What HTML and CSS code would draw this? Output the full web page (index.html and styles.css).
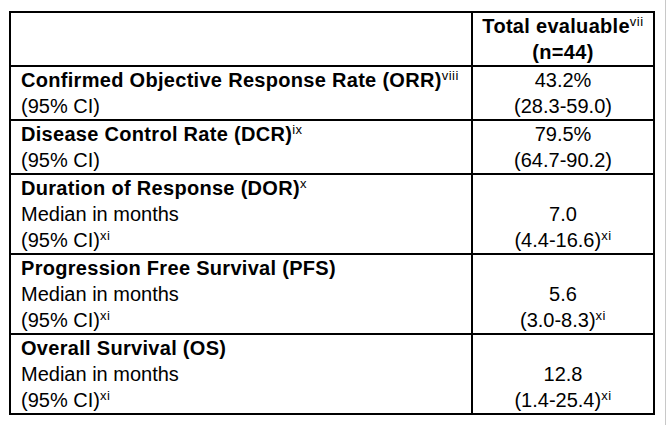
FILE: index.html
```html
<!DOCTYPE html>
<html>
<head>
<meta charset="utf-8">
<link rel="stylesheet" href="styles.css">
</head>
<body>
<div class="page">
<table class="results">
  <tr>
    <td class="label"></td>
    <td class="value head"><b>Total evaluable<sup>vii</sup></b><br><b>(n=44)</b></td>
  </tr>
  <tr>
    <td class="label"><b>Confirmed Objective Response Rate (ORR)<sup>viii</sup></b><br>(95% CI)</td>
    <td class="value">43.2%<br>(28.3-59.0)</td>
  </tr>
  <tr>
    <td class="label"><b>Disease Control Rate (DCR)<sup>ix</sup></b><br>(95% CI)</td>
    <td class="value">79.5%<br>(64.7-90.2)</td>
  </tr>
  <tr>
    <td class="label"><b>Duration of Response (DOR)<sup>x</sup></b><br>Median in months<br>(95% CI)<sup>xi</sup></td>
    <td class="value">7.0<br>(4.4-16.6)<sup>xi</sup></td>
  </tr>
  <tr>
    <td class="label"><b>Progression Free Survival (PFS)</b><br>Median in months<br>(95% CI)<sup>xi</sup></td>
    <td class="value">5.6<br>(3.0-8.3)<sup>xi</sup></td>
  </tr>
  <tr>
    <td class="label"><b>Overall Survival (OS)</b><br>Median in months<br>(95% CI)<sup>xi</sup></td>
    <td class="value">12.8<br>(1.4-25.4)<sup>xi</sup></td>
  </tr>
</table>
</div>
</body>
</html>
```
FILE: styles.css
```css
html, body {
  margin: 0;
  padding: 0;
  background: #fff;
}
.page {
  width: 666px;
  height: 425px;
  border-right: 1px solid #c8c8c8;
  padding: 11px 0 0 9px;
  box-sizing: border-box;
  font-family: "Liberation Sans", Arial, sans-serif;
  font-size: 20px;
  line-height: 26px;
  color: #000;
}
.results {
  border-collapse: collapse;
  width: 646px;
}
.results td {
  border: 2px solid #000;
  padding: 0;
  vertical-align: bottom;
}
.label {
  width: 450px;
  padding-left: 10px !important;
  text-align: left;
}
.value {
  text-align: center;
}
.results tr:first-child td {
  height: 52px;
}
b {
  letter-spacing: 0.3px;
}
sup {
  font-size: 13px;
  line-height: 0;
  vertical-align: 7px;
  font-weight: normal;
  letter-spacing: 0.5px;
}
```
